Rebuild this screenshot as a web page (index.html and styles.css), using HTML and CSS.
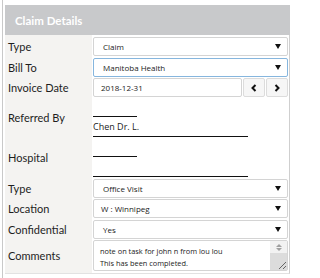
FILE: index.html
```html
<!DOCTYPE html>
<html>
<head>
<meta charset="utf-8">
<link rel="stylesheet" href="styles.css">
</head>
<body>
<div class="frame">
  <div class="panel">
    <div class="head">Claim Details</div>
    <div class="body">
      <div class="row">
        <div class="lbl">Type</div>
        <div class="sel"><span>Claim</span><i class="arr"></i></div>
      </div>
      <div class="row">
        <div class="lbl">Bill To</div>
        <div class="sel focus"><span>Manitoba Health</span><i class="arr"></i></div>
      </div>
      <div class="row">
        <div class="lbl">Invoice Date</div>
        <div class="date">
          <div class="inp">2018-12-31</div>
          <div class="btn"><svg width="6" height="8" viewBox="0 0 6 8"><polyline points="4.5,1 1.5,4 4.5,7" fill="none" stroke="#111" stroke-width="2"/></svg></div>
          <div class="btn"><svg width="6" height="8" viewBox="0 0 6 8"><polyline points="1.5,1 4.5,4 1.5,7" fill="none" stroke="#111" stroke-width="2"/></svg></div>
        </div>
      </div>
      <div class="row block">
        <div class="lbl top">Referred By</div>
        <div class="ac">
          <div class="short"></div>
          <div class="actext">Chen Dr. L.</div>
          <div class="long"></div>
        </div>
      </div>
      <div class="row block">
        <div class="lbl top">Hospital</div>
        <div class="ac">
          <div class="short"></div>
          <div class="actext"></div>
          <div class="long"></div>
        </div>
      </div>
      <div class="row">
        <div class="lbl">Type</div>
        <div class="sel"><span>Office Visit</span><i class="arr"></i></div>
      </div>
      <div class="row">
        <div class="lbl">Location</div>
        <div class="sel loose"><span>W : Winnipeg</span><i class="arr"></i></div>
      </div>
      <div class="row">
        <div class="lbl">Confidential</div>
        <div class="sel"><span>Yes</span><i class="arr"></i></div>
      </div>
      <div class="row">
        <div class="lbl">Comments</div>
        <div class="ta">
          <div class="tatext">note on task for john n from lou lou<br>This has been completed.</div>
          <div class="sb">
            <div class="sbtop"><i class="up"></i><i class="dn"></i></div>
            <div class="sbgrip"><svg width="10" height="10" viewBox="0 0 10 10"><line x1="9" y1="2" x2="2" y2="9" stroke="#666" stroke-width="1"/><line x1="9" y1="6" x2="6" y2="9" stroke="#666" stroke-width="1"/></svg></div>
          </div>
        </div>
      </div>
    </div>
  </div>
</div>
</body>
</html>
```
FILE: styles.css
```css
* { box-sizing: border-box; }
html, body { margin: 0; padding: 0; background: #fff; }
body { width: 293px; height: 278px; overflow: hidden; font-family: Lato, "Open Sans", sans-serif; }

.frame {
  margin-left: 2px;
  border-left: 1px solid #c9c9c9;
  height: 278px;
  padding: 5px 0 0 2px;
}
.panel { width: 285px; }
.head {
  height: 30px;
  background: #c8c9cb;
  color: #fff;
  font-weight: bold;
  font-size: 11.5px;
  padding-left: 10px;
  display: flex;
  align-items: center;
}
.body {
  background: linear-gradient(90deg, #f4f3f1 0 87px, #fff 87px);
  border-right: 1px solid #cfcfcf;
  border-bottom: 1px solid #e2e2e2;
  padding: 2px 1px 1.5px 0;
  display: flex;
  flex-direction: column;
  gap: 1.5px;
}
.row {
  display: grid;
  grid-template-columns: 87px 1fr;
  column-gap: 1px;
  align-items: center;
}
.lbl {
  font-size: 11px;
  color: #1e1e1e;
  padding-left: 3px;
}
.lbl.top { align-self: start; padding-top: 12px; }

.sel, .inp, .ta {
  border: 1px solid #d4d4d4;
  border-radius: 2px;
  background: #fff;
}
.sel {
  height: 19px;
  display: flex;
  align-items: center;
  justify-content: space-between;
  padding: 0 6px 0 9px;
  font-family: "Open Sans", sans-serif;
  font-size: 8px;
  color: #222;
}
.sel.loose { padding-left: 7px; }
.sel.focus { border-color: #86b6de; }
.arr {
  width: 0; height: 0;
  border-left: 3px solid transparent;
  border-right: 3px solid transparent;
  border-top: 5px solid #111;
}
.date { display: flex; height: 19px; gap: 1px; }
.inp {
  flex: 1;
  display: flex;
  align-items: center;
  padding-left: 7px;
  font-family: "Open Sans", sans-serif;
  font-size: 8px;
  color: #222;
}
.btn {
  width: 22px;
  border: 1px solid #dcdcdc;
  border-radius: 2px;
  background: #f6f6f6;
  display: flex;
  align-items: center;
  justify-content: center;
}
.ac { display: flex; flex-direction: column; padding-top: 17.5px; }
.short { width: 44px; height: 1px; background: #111; }
.long { width: 155px; height: 1px; background: #111; }
.actext {
  height: 19px;
  display: flex;
  align-items: center;
  font-family: "Open Sans", sans-serif;
  font-size: 9px;
  color: #222;
}
.ta {
  height: 31px;
  display: flex;
  justify-content: space-between;
}
.tatext {
  font-family: "Open Sans", sans-serif;
  font-size: 7.4px;
  line-height: 12px;
  color: #222;
  padding: 4px 0 0 6px;
}
.sb { width: 17px; display: flex; flex-direction: column; }
.sbtop {
  height: 12px;
  background: #f2f2f2;
  display: flex;
  flex-direction: column;
  align-items: center;
  justify-content: center;
  gap: 1px;
}
.up, .dn { width: 0; height: 0; border-left: 3px solid transparent; border-right: 3px solid transparent; }
.up { border-bottom: 3px solid #a0a0a0; }
.dn { border-top: 3px solid #a0a0a0; }
.sbgrip {
  flex: 1;
  background: #dcdcdc;
  display: flex;
  align-items: flex-end;
  justify-content: flex-end;
}
```
